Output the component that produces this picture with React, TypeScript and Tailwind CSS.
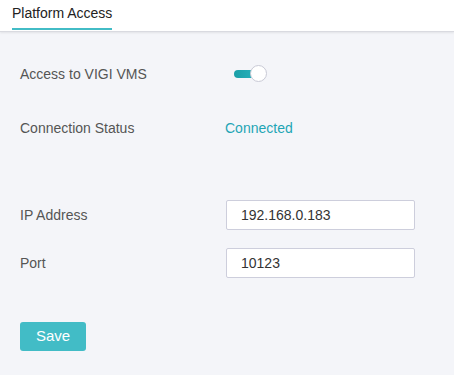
import { useState } from "react";

export default function App() {
  const [enabled, setEnabled] = useState(true);
  const [ip, setIp] = useState("192.168.0.183");
  const [port, setPort] = useState("10123");

  return (
    <div
      className="w-[454px] h-[375px] bg-[#f4f5f9] text-[14px] overflow-hidden"
      style={{ fontFamily: '"Liberation Sans", Arial, sans-serif' }}
    >
      {/* header tabs */}
      <div className="h-[32px] bg-white border-b border-[#d9dae0] shadow-[0_1px_2px_rgba(0,0,0,0.08)] px-3 flex">
        <div className="relative h-full flex items-start pt-[3px] text-[#222]">
          Platform Access
          <div className="absolute left-0 right-0 bottom-[1px] h-[2px] bg-[#42bcc6]" />
        </div>
      </div>

      <div className="pl-5 pt-[27px]">
        <div className="flex items-center h-[30px]">
          <div className="w-[205px] text-[#555]">Access to VIGI VMS</div>
          <button
            onClick={() => setEnabled(!enabled)}
            className="relative ml-[9px] w-[33px] h-[18px] flex items-center"
          >
            <span
              className={
                enabled
                  ? "block w-[26px] h-[8px] rounded-full bg-gradient-to-r from-[#1a9fa8] to-[#2bb5bf]"
                  : "block w-[26px] h-[8px] rounded-full bg-[#c8c9d4]"
              }
            />
            <span
              className={
                enabled
                  ? "absolute left-[16px] top-[0px] w-[17px] h-[17px] rounded-full bg-white border border-[#c9cad6]"
                  : "absolute left-[-4px] top-[0px] w-[17px] h-[17px] rounded-full bg-white border border-[#c9cad6]"
              }
            />
          </button>
        </div>

        <div className="flex items-center h-[30px] mt-[24px]">
          <div className="w-[205px] text-[#555]">Connection Status</div>
          <div className="text-[#1fa5b5]">Connected</div>
        </div>

        <div className="flex items-center h-[30px] mt-[57px]">
          <div className="w-[206px] text-[#555]">IP Address</div>
          <input
            value={ip}
            onChange={(e) => setIp(e.target.value)}
            className="w-[189px] h-[30px] bg-white border border-[#cdcedc] rounded-[2px] px-[14px] text-[#333] outline-none"
          />
        </div>

        <div className="flex items-center h-[30px] mt-[18px]">
          <div className="w-[206px] text-[#555]">Port</div>
          <input
            value={port}
            onChange={(e) => setPort(e.target.value)}
            className="w-[189px] h-[30px] bg-white border border-[#cdcedc] rounded-[2px] px-[14px] text-[#333] outline-none"
          />
        </div>

        <button className="mt-[44px] w-[66px] h-[29px] rounded-[3px] bg-[#42bcc6] text-white text-[15px]">
          Save
        </button>
      </div>
    </div>
  );
}
